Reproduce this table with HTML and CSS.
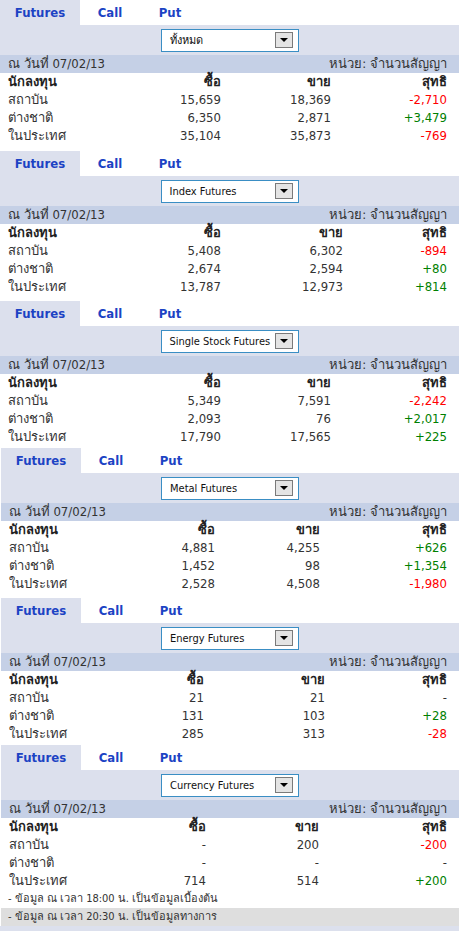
FILE: index.html
```html
<!DOCTYPE html>
<html lang="th">
<head>
  <meta charset="UTF-8" />
  <title>Futures</title>
  <link rel="stylesheet" href="styles.css">
</head>
<body>

  <!-- all -->
  <div class="block first">
    <div class="tabs"><a class="tab active">Futures</a><a class="tab">Call</a><a class="tab">Put</a></div>
    <div class="filter"><div class="select"><span>ทั้งหมด</span><span class="arrow"></span></div></div>
    <div class="date-row"><span>ณ วันที่ 07/02/13</span><span>หน่วย: จำนวนสัญญา</span></div>
    <div class="data cols-1">
      <b>นักลงทุน</b><b>ซื้อ</b><b>ขาย</b><b>สุทธิ</b>
      <span>สถาบัน</span><span>15,659</span><span>18,369</span><span class="neg">-2,710</span>
      <span>ต่างชาติ</span><span>6,350</span><span>2,871</span><span class="pos">+3,479</span>
      <span>ในประเทศ</span><span>35,104</span><span>35,873</span><span class="neg">-769</span>
    </div>
  </div>

  <!-- index -->
  <div class="block">
    <div class="tabs"><a class="tab active">Futures</a><a class="tab">Call</a><a class="tab">Put</a></div>
    <div class="filter"><div class="select"><span>Index Futures</span><span class="arrow"></span></div></div>
    <div class="date-row"><span>ณ วันที่ 07/02/13</span><span>หน่วย: จำนวนสัญญา</span></div>
    <div class="data cols-2">
      <b>นักลงทุน</b><b>ซื้อ</b><b>ขาย</b><b>สุทธิ</b>
      <span>สถาบัน</span><span>5,408</span><span>6,302</span><span class="neg">-894</span>
      <span>ต่างชาติ</span><span>2,674</span><span>2,594</span><span class="pos">+80</span>
      <span>ในประเทศ</span><span>13,787</span><span>12,973</span><span class="pos">+814</span>
    </div>
  </div>

  <!-- single stock -->
  <div class="block tight">
    <div class="tabs"><a class="tab active">Futures</a><a class="tab">Call</a><a class="tab">Put</a></div>
    <div class="filter"><div class="select"><span>Single Stock Futures</span><span class="arrow"></span></div></div>
    <div class="date-row"><span>ณ วันที่ 07/02/13</span><span>หน่วย: จำนวนสัญญา</span></div>
    <div class="data cols-1">
      <b>นักลงทุน</b><b>ซื้อ</b><b>ขาย</b><b>สุทธิ</b>
      <span>สถาบัน</span><span>5,349</span><span>7,591</span><span class="neg">-2,242</span>
      <span>ต่างชาติ</span><span>2,093</span><span>76</span><span class="pos">+2,017</span>
      <span>ในประเทศ</span><span>17,790</span><span>17,565</span><span class="pos">+225</span>
    </div>
  </div>

  <!-- metal -->
  <div class="block shift">
    <div class="tabs"><a class="tab active">Futures</a><a class="tab">Call</a><a class="tab">Put</a></div>
    <div class="filter"><div class="select"><span>Metal Futures</span><span class="arrow"></span></div></div>
    <div class="date-row"><span>ณ วันที่ 07/02/13</span><span>หน่วย: จำนวนสัญญา</span></div>
    <div class="data cols-4">
      <b>นักลงทุน</b><b>ซื้อ</b><b>ขาย</b><b>สุทธิ</b>
      <span>สถาบัน</span><span>4,881</span><span>4,255</span><span class="pos">+626</span>
      <span>ต่างชาติ</span><span>1,452</span><span>98</span><span class="pos">+1,354</span>
      <span>ในประเทศ</span><span>2,528</span><span>4,508</span><span class="neg">-1,980</span>
    </div>
  </div>

  <!-- energy -->
  <div class="block shift tight">
    <div class="tabs"><a class="tab active">Futures</a><a class="tab">Call</a><a class="tab">Put</a></div>
    <div class="filter"><div class="select"><span>Energy Futures</span><span class="arrow"></span></div></div>
    <div class="date-row"><span>ณ วันที่ 07/02/13</span><span>หน่วย: จำนวนสัญญา</span></div>
    <div class="data cols-5">
      <b>นักลงทุน</b><b>ซื้อ</b><b>ขาย</b><b>สุทธิ</b>
      <span>สถาบัน</span><span>21</span><span>21</span><span>-</span>
      <span>ต่างชาติ</span><span>131</span><span>103</span><span class="pos">+28</span>
      <span>ในประเทศ</span><span>285</span><span>313</span><span class="neg">-28</span>
    </div>
  </div>

  <!-- currency -->
  <div class="block shift last">
    <div class="tabs"><a class="tab active">Futures</a><a class="tab">Call</a><a class="tab">Put</a></div>
    <div class="filter"><div class="select"><span>Currency Futures</span><span class="arrow"></span></div></div>
    <div class="date-row"><span>ณ วันที่ 07/02/13</span><span>หน่วย: จำนวนสัญญา</span></div>
    <div class="data cols-6">
      <b>นักลงทุน</b><b>ซื้อ</b><b>ขาย</b><b>สุทธิ</b>
      <span>สถาบัน</span><span>-</span><span>200</span><span class="neg">-200</span>
      <span>ต่างชาติ</span><span>-</span><span>-</span><span>-</span>
      <span>ในประเทศ</span><span>714</span><span>514</span><span class="pos">+200</span>
    </div>
    <div class="note">- ข้อมูล ณ เวลา 18:00 น. เป็นข้อมูลเบื้องต้น</div>
    <div class="note gray">- ข้อมูล ณ เวลา 20:30 น. เป็นข้อมูลทางการ</div>
  </div>

  <div class="bottom"></div>

</body>
</html>
```

FILE: styles.css
```css
* {
  margin: 0;
  padding: 0;
  box-sizing: border-box;
}

body {
  background: #fff;
  color: #333;
  font-family: "DejaVu Sans Condensed", "DejaVu Sans", Tahoma, sans-serif;
  font-size: 13px;
}

.block {
  margin-bottom: 5px;
}

.block.first {
  margin-bottom: 6px;
}

.block.tight {
  margin-bottom: 2px;
}

.block.shift {
  margin-left: 1px;
}

.block.last {
  margin-bottom: 0;
}

/* tabs */
.tabs {
  display: flex;
  height: 25px;
}

.tab {
  width: 60px;
  line-height: 25px;
  text-align: center;
  font-weight: bold;
  font-size: 13px;
  color: #1c43c4;
}

.tab.active {
  width: 80px;
  background: #dce0ed;
}

/* dropdown */
.filter {
  background: #dce0ed;
  height: 30px;
  display: flex;
  justify-content: center;
  align-items: center;
}

.select {
  width: 138px;
  height: 23px;
  background: #fff;
  border: 1px solid #3a8ec4;
  display: flex;
  align-items: center;
  justify-content: space-between;
  padding: 0 5px 0 8px;
  font-size: 11px;
  color: #111;
}

.arrow {
  width: 18px;
  height: 16px;
  border: 1px solid #7a7a7a;
  background: #e4e4e4;
  position: relative;
}

.arrow::after {
  content: "";
  position: absolute;
  left: 4px;
  top: 5px;
  border-left: 4px solid transparent;
  border-right: 4px solid transparent;
  border-top: 4px solid #000;
}

/* date bar */
.date-row {
  background: #c5d0e6;
  height: 18px;
  line-height: 18px;
  display: flex;
  justify-content: space-between;
  padding: 0 12px 0 8px;
}

/* numbers */
.data {
  display: grid;
  grid-auto-rows: 18px;
  line-height: 18px;
  padding: 0 12px 0 8px;
}

.data > :not(:nth-child(4n+1)) {
  text-align: right;
}

.data b {
  color: #222;
}

.cols-1 { grid-template-columns: 100px 113px 110px 1fr; }
.cols-2 { grid-template-columns: 100px 113px 122px 1fr; }
.cols-4 { grid-template-columns: 100px 106px 105px 1fr; }
.cols-5 { grid-template-columns: 100px 95px 121px 1fr; }
.cols-6 { grid-template-columns: 100px 97px 113px 1fr; }

.neg {
  color: #ff0000;
}

.pos {
  color: #008000;
}

.note {
  height: 18px;
  line-height: 18px;
  font-size: 11px;
  padding-left: 7px;
}

.note.gray {
  background: #dedede;
}

.bottom {
  height: 5px;
  background: #dce0ed;
}
```
